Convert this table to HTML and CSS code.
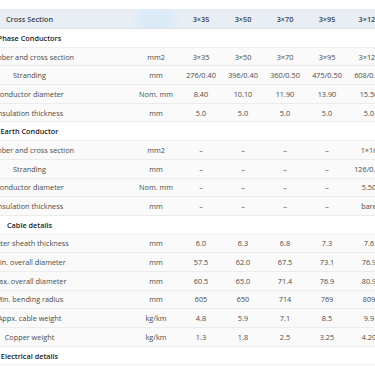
FILE: index.html
```html
<!DOCTYPE html>
<html lang="en">
<head>
  <meta charset="UTF-8">
  <meta name="viewport" content="width=device-width, initial-scale=1.0">
  <title>Cable Specifications</title>
  <link rel="stylesheet" href="styles.css">
</head>
<body>
  <div class="table-wrap">
    <table class="spec-table">
      <colgroup>
        <col class="col-name">
        <col class="col-unit">
        <col class="col-val"><col class="col-val"><col class="col-val"><col class="col-val"><col class="col-val"><col class="col-val">
      </colgroup>
      <thead>
        <tr>
          <th>Cross Section</th>
          <th class="glow"></th>
          <th>3×35</th><th>3×50</th><th>3×70</th><th>3×95</th><th>3×120</th><th>3×150</th>
        </tr>
      </thead>
      <tbody>
        <tr class="section"><td>Phase Conductors</td><td colspan="7"></td></tr>
        <tr><td>Number and cross section</td><td>mm2</td><td>3×35</td><td>3×50</td><td>3×70</td><td>3×95</td><td>3×120</td><td>3×150</td></tr>
        <tr><td>Stranding</td><td>mm</td><td>276/0.40</td><td>396/0.40</td><td>360/0.50</td><td>475/0.50</td><td>608/0.50</td><td>756/0.50</td></tr>
        <tr><td>Conductor diameter</td><td>Nom. mm</td><td>8.40</td><td>10.10</td><td>11.90</td><td>13.90</td><td>15.50</td><td>17.30</td></tr>
        <tr><td>Insulation thickness</td><td>mm</td><td>5.0</td><td>5.0</td><td>5.0</td><td>5.0</td><td>5.0</td><td>5.0</td></tr>
        <tr class="section"><td>Earth Conductor</td><td colspan="7"></td></tr>
        <tr><td>Number and cross section</td><td>mm2</td><td>–</td><td>–</td><td>–</td><td>–</td><td>1×16</td><td>1×25</td></tr>
        <tr><td>Stranding</td><td>mm</td><td>–</td><td>–</td><td>–</td><td>–</td><td>126/0.40</td><td>196/0.40</td></tr>
        <tr><td>Conductor diameter</td><td>Nom. mm</td><td>–</td><td>–</td><td>–</td><td>–</td><td>5.50</td><td>6.90</td></tr>
        <tr><td>Insulation thickness</td><td>mm</td><td>–</td><td>–</td><td>–</td><td>–</td><td>bare</td><td>bare</td></tr>
        <tr class="section"><td>Cable details</td><td colspan="7"></td></tr>
        <tr><td>Outer sheath thickness</td><td>mm</td><td>6.0</td><td>6.3</td><td>6.8</td><td>7.3</td><td>7.6</td><td>8.0</td></tr>
        <tr><td>Min. overall diameter</td><td>mm</td><td>57.5</td><td>62.0</td><td>67.5</td><td>73.1</td><td>76.9</td><td>82.0</td></tr>
        <tr><td>Max. overall diameter</td><td>mm</td><td>60.5</td><td>65.0</td><td>71.4</td><td>76.9</td><td>80.9</td><td>86.2</td></tr>
        <tr><td>Min. bending radius</td><td>mm</td><td>605</td><td>650</td><td>714</td><td>769</td><td>809</td><td>862</td></tr>
        <tr><td>Appx. cable weight</td><td>kg/km</td><td>4.8</td><td>5.9</td><td>7.1</td><td>8.5</td><td>9.9</td><td>11.6</td></tr>
        <tr><td>Copper weight</td><td>kg/km</td><td>1.3</td><td>1.8</td><td>2.5</td><td>3.25</td><td>4.20</td><td>5.20</td></tr>
        <tr class="section"><td>Electrical details</td><td colspan="7"></td></tr>
      </tbody>
    </table>
  </div>
</body>
</html>
```

FILE: styles.css
```css
body {
  margin: 0;
  font-family: 'Open Sans', 'Noto Sans', sans-serif;
  color: #444;
  background: #fff;
  overflow: hidden;
}
.table-wrap {
  overflow: hidden;
  padding-top: 9px;
}
.spec-table {
  border-collapse: collapse;
  table-layout: fixed;
  width: 499px;
  margin-left: -73px;
  font-size: 7.3px;
}
.col-name {
  width: 205px;
}
.col-unit {
  width: 48px;
}
.col-val {
  width: 42px;
}
.spec-table th,
.spec-table td {
  text-align: center;
  white-space: nowrap;
  overflow: hidden;
  padding: 0;
  line-height: 10px;
}
.spec-table thead th {
  height: 19px;
  background-color: #e9eef4;
  color: #3c4450;
  font-weight: 600;
  border-bottom: 1px solid #dde3ea;
}
.spec-table thead th.glow {
  background: linear-gradient(90deg, #e6eef6 0%, #dbeaf7 30%, #dbeaf7 70%, #e6eef6 100%);
}
.spec-table tbody td {
  height: 17.7px;
  background-color: #fafafa;
  border-bottom: 1px solid #ececec;
  color: #4a4a4a;
}
.spec-table tbody tr.section td {
  background-color: #fff;
  font-weight: 600;
  color: #222;
  border-bottom: 1px solid #f0f0f0;
}
```
